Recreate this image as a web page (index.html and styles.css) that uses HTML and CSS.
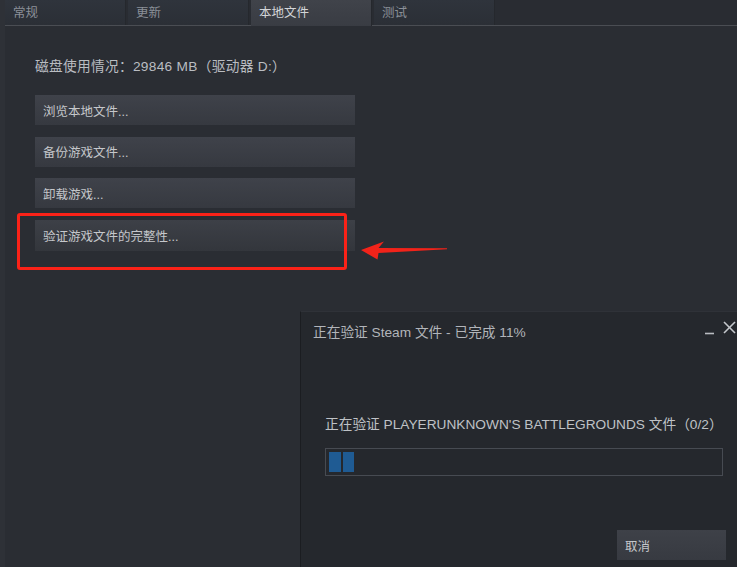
FILE: index.html
```html
<!DOCTYPE html>
<html lang="zh-CN">
<head>
<meta charset="utf-8">
<title>Steam 本地文件</title>
<link rel="stylesheet" href="styles.css">
</head>
<body>
<div class="app">
  <div class="tabs">
    <div class="tab">常规</div>
    <div class="tab">更新</div>
    <div class="tab active">本地文件</div>
    <div class="tab">测试</div>
  </div>
  <div class="panel">
    <p class="disk">磁盘使用情况：29846 MB（驱动器 D:）</p>
    <div class="actions">
      <button class="btn">浏览本地文件...</button>
      <button class="btn">备份游戏文件...</button>
      <button class="btn">卸载游戏...</button>
      <button class="btn btn-verify">验证游戏文件的完整性...</button>
    </div>
  </div>

  <div class="highlight"></div>
  <svg class="arrow" width="100" height="30" viewBox="355 237 100 30">
    <polygon points="361,250 384,241.5 378.5,248 447,248.3 447,249.3 378.5,253 377.5,259.5" fill="#f2231a"/>
  </svg>

  <div class="dialog">
    <div class="dlg-title">
      <span class="dlg-title-text">正在验证 Steam 文件 - 已完成 11%</span>
      <div class="win-controls">
        <svg width="34" height="16" viewBox="0 0 34 16">
          <line x1="2" y1="14.5" x2="11" y2="14.5" stroke="#b9bcc1" stroke-width="1.6"/>
          <line x1="21" y1="3" x2="32" y2="14" stroke="#c4c7cc" stroke-width="1.6"/>
          <line x1="32" y1="3" x2="21" y2="14" stroke="#c4c7cc" stroke-width="1.6"/>
        </svg>
      </div>
    </div>
    <div class="dlg-body">
      <p class="dlg-label">正在验证 PLAYERUNKNOWN'S BATTLEGROUNDS 文件（0/2）</p>
      <div class="progress">
        <span class="seg seg-a"></span>
        <span class="seg seg-b"></span>
      </div>
    </div>
    <div class="dlg-footer">
      <button class="btn btn-cancel">取消</button>
    </div>
  </div>
</div>
</body>
</html>
```
FILE: styles.css
```css
* { box-sizing: border-box; }
html, body { margin: 0; padding: 0; }
body {
  width: 737px;
  height: 567px;
  overflow: hidden;
  background: #2a2d33;
  font-family: "Liberation Sans", "Noto Sans CJK SC", sans-serif;
  font-size: 13px;
}
.app {
  position: relative;
  width: 737px;
  height: 567px;
  background: #2a2d33;
  border-left: 5px solid #2e3137;
}
.tabs {
  display: flex;
  gap: 2px;
  height: 26px;
  border-bottom: 1px solid #4a4d53;
  background: #292c32;
}
.tab {
  width: 121px;
  height: 25px;
  padding: 0 0 3px 8px;
  display: flex;
  align-items: center;
  font-size: 12.5px;
  color: #8b9098;
  background: linear-gradient(#2f343c, #2b2f36);
  border-right: 1px solid #25282d;
}
.tab.active {
  height: 26px;
  margin-bottom: -1px;
  padding-bottom: 4px;
  color: #d3d5d8;
  background: linear-gradient(#40434a, #393c43);
}
.panel {
  padding: 32px 0 0 30px;
}
.disk {
  margin: 0;
  line-height: 17px;
  font-size: 13.7px;
  letter-spacing: 0.3px;
  color: #babdc2;
}
.actions {
  display: flex;
  flex-direction: column;
  gap: 11.5px;
  margin-top: 20px;
}
.btn {
  width: 320px;
  height: 30px;
  padding: 0 0 0 8px;
  border: 0;
  text-align: left;
  font-family: inherit;
  font-size: 12.5px;
  color: #c5c7cb;
  background: linear-gradient(#3f424a, #363940);
}
.btn-verify {
  height: 31px;
  background: linear-gradient(#3d4047, #33363c);
}
.highlight {
  position: absolute;
  left: 12px;
  top: 213px;
  width: 330px;
  height: 57px;
  border: 3px solid #fb2218;
  border-radius: 3px;
}
.arrow {
  position: absolute;
  left: 350px;
  top: 237px;
}
.dialog {
  position: absolute;
  left: 295px;
  top: 311px;
  right: 0;
  bottom: 0;
  display: flex;
  flex-direction: column;
  background: #25282d;
  border-left: 1px solid #1b1d21;
  border-top: 1px solid #2f3238;
}
.dlg-title {
  height: 37px;
  display: flex;
  align-items: center;
  justify-content: space-between;
  padding-left: 12px;
  font-size: 13.7px;
  color: #b2b5ba;
}
.win-controls {
  display: flex;
  padding-right: 0;
  margin-top: -8px;
}
.dlg-body {
  padding: 67px 14px 0 24px;
}
.dlg-label {
  margin: 0;
  line-height: 17px;
  font-size: 13.7px;
  color: #bfc2c6;
}
.progress {
  display: flex;
  gap: 2px;
  height: 28px;
  margin-top: 15px;
  padding: 3px 0 3px 3px;
  border: 1px solid #474b52;
  background: #25282d;
}
.seg {
  height: 20px;
  background: #1f5b93;
}
.seg-a { width: 12px; }
.seg-b { width: 11px; }
.dlg-footer {
  display: flex;
  justify-content: flex-end;
  padding: 54px 11px 0 0;
}
.btn-cancel {
  width: 109px;
  height: 30px;
  background: linear-gradient(#3e4148, #373a41);
}
```
